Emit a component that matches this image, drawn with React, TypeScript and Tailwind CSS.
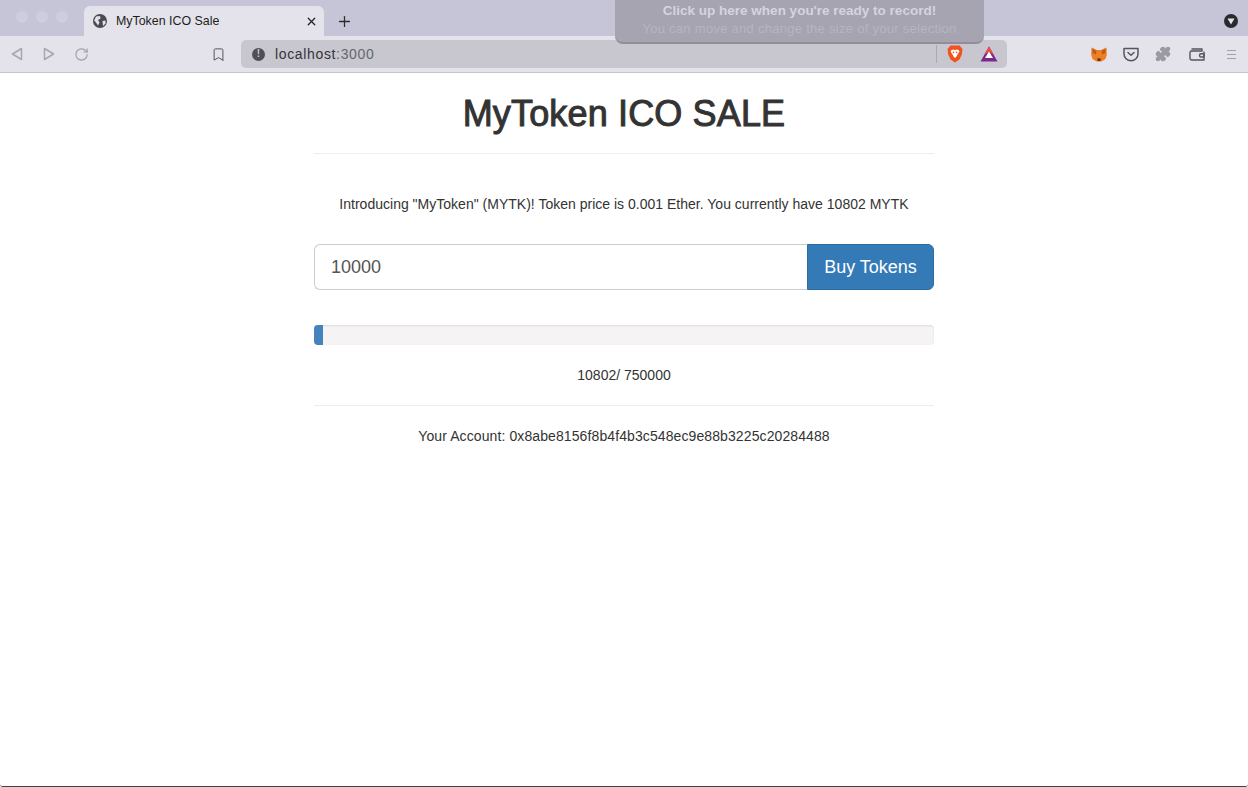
import { Plus, X, RotateCw, Bookmark, Puzzle } from 'lucide-react';

function BackIcon({ flip }: { flip?: boolean }) {
  return (
    <svg width="14" height="16" viewBox="0 0 14 16" fill="none" stroke="#a6a6ae" strokeWidth="1.5" strokeLinejoin="round" className={flip ? 'rotate-180' : ''}>
      <path d="M11.5 2.5 L2.5 8 L11.5 13.5 Z" />
    </svg>
  );
}

function Globe() {
  return (
    <svg width="14" height="14" viewBox="0 0 14 14">
      <circle cx="7" cy="7" r="7" fill="#4a4a50" />
      <path d="M3 2.5 L7 2 L7.5 4.5 L5 6 L6.5 8.5 L5 11.5 L3 8.5 L1.2 6.5 Z" fill="#e4e3ec" />
      <path d="M9.5 7 L12.5 6.5 L12.5 9.5 L10 12 Z" fill="#e4e3ec" />
    </svg>
  );
}

function BraveLogo() {
  return (
    <svg width="16" height="18" viewBox="0 0 16 18">
      <path d="M3.5 0.5 H12.5 L15.5 4 L14.8 9.5 L12.5 14.5 L8 17.5 L3.5 14.5 L1.2 9.5 L0.5 4 Z" fill="#f1521f" />
      <path d="M4.5 5 L6.8 4.5 L8 5.3 L9.2 4.5 L11.5 5 L12.5 6.5 L10.5 9.5 L9.5 11.5 L8 13 L6.5 11.5 L5.5 9.5 L3.5 6.5 Z" fill="#ffffff" />
      <circle cx="6.4" cy="7.4" r="0.8" fill="#f1521f" />
      <circle cx="9.6" cy="7.4" r="0.8" fill="#f1521f" />
    </svg>
  );
}

function BatLogo() {
  return (
    <svg width="18" height="16" viewBox="0 0 18 16">
      <path d="M9 0.5 L17.5 15.5 H0.5 Z" fill="#7a2a8c" />
      <path d="M9 0.5 L13.6 8.6 L9 6 L4.4 8.6 Z" fill="#ee4a3f" />
      <path d="M9 5.5 L13 12 H5 Z" fill="#ffffff" />
    </svg>
  );
}

function FoxLogo() {
  return (
    <svg width="16" height="15" viewBox="0 0 16 15">
      <path d="M0.5 0.5 L6 3 H10 L15.5 0.5 L15.8 8 L14.5 12 L10.5 14.5 H5.5 L1.5 12 L0.2 8 Z" fill="#ee7f22" />
      <path d="M1.5 1.5 L5.5 4 L5 7.5 L1.5 6 Z" fill="#b85c1c" />
      <path d="M14.5 1.5 L10.5 4 L11 7.5 L14.5 6 Z" fill="#b85c1c" />
      <path d="M6 11.5 H10 L9.2 14 H6.8 Z" fill="#4a3325" />
    </svg>
  );
}

function PocketIcon() {
  return (
    <svg width="16" height="15" viewBox="0 0 16 15" fill="none" stroke="#55555c" strokeWidth="1.5" strokeLinecap="round" strokeLinejoin="round">
      <path d="M1 1.5 H15 V7 A7 6.8 0 0 1 1 7 Z" />
      <path d="M5 5.5 L8 8.2 L11 5.5" />
    </svg>
  );
}

function WalletIcon() {
  return (
    <svg width="16" height="13" viewBox="0 0 16 13" fill="none" stroke="#55555c" strokeWidth="1.4" strokeLinejoin="round">
      <path d="M2.5 1 H13 V3 H2.5 A1.6 1.6 0 0 0 1 4.5 V10.5 A1.6 1.6 0 0 0 2.5 12 H15 V3.5" />
      <rect x="10.5" y="5.8" width="4.8" height="3.2" rx="1.6" />
    </svg>
  );
}

function BrowserChrome() {
  return (
    <div className="relative shrink-0">
      {/* tab strip */}
      <div className="flex h-9 items-end bg-[#c5c5d7]">
        <div className="flex h-9 w-[84px] items-center gap-2 pb-[2px] pl-[16px] opacity-25">
          <span className="h-3 w-3 rounded-full bg-[#e8e8f0]" />
          <span className="h-3 w-3 rounded-full bg-[#e8e8f0]" />
          <span className="h-3 w-3 rounded-full bg-[#e8e8f0]" />
        </div>
        <div className="flex h-[30px] w-[240px] items-center rounded-t-[6px] bg-[#e4e3ec] pl-[9px] pr-[6px]">
          <Globe />
          <span className="ml-[9px] flex-1 text-[12.4px] text-[#1d1d20]">MyToken ICO Sale</span>
          <X size={13} strokeWidth={2.4} color="#222" />
        </div>
        <div className="flex h-[30px] w-[40px] items-center justify-center">
          <Plus size={17} strokeWidth={1.8} color="#2d2d30" />
        </div>
        <div className="mr-[10px] ml-auto flex h-[30px] items-center">
          <span className="flex h-[14px] w-[14px] items-center justify-center rounded-full bg-[#2a2a2e]">
            <svg width="8" height="7" viewBox="0 0 8 7">
              <path d="M0.5 0.5 H7.5 L4 6.5 Z" fill="#e4e3ec" />
            </svg>
          </span>
        </div>
      </div>
      {/* toolbar */}
      <div className="flex h-[37px] items-center border-b border-[#c4c4cf] bg-[#e4e3ec]">
        <div className="flex w-[241px] items-center pl-[10px]">
          <BackIcon />
          <span className="ml-[18px]"><BackIcon flip /></span>
          <RotateCw size={15} strokeWidth={1.8} color="#a0a0a8" className="ml-[18px]" />
          <Bookmark size={15} strokeWidth={1.6} color="#55555c" className="ml-[122px]" />
        </div>
        <div className="flex h-[28px] w-[766px] items-center rounded-[5px] bg-[#c8c7d0] pl-[11px] pr-[9px]">
          <span className="flex h-[13px] w-[13px] items-center justify-center rounded-full bg-[#4e4e54] text-[10px] leading-none font-bold text-[#c8c7d0]">!</span>
          <span className="ml-[10px] flex-1 text-[14px] tracking-[0.65px] text-[#333338]">
            localhost<span className="text-[#66666c]">:3000</span>
          </span>
          <span className="h-[18px] w-px bg-[#aaaab2]" />
          <span className="ml-[10px]"><BraveLogo /></span>
          <span className="ml-[17px]"><BatLogo /></span>
        </div>
        <div className="flex flex-1 items-center pl-[84px]">
          <FoxLogo />
          <span className="ml-[16px]"><PocketIcon /></span>
          <Puzzle size={16} fill="#9a9aa2" color="#9a9aa2" className="ml-[16px]" />
          <span className="ml-[18px]"><WalletIcon /></span>
          <div className="ml-[22px] flex w-[9px] flex-col gap-[3px]">
            <span className="h-px bg-[#a0a0a8]" />
            <span className="h-px bg-[#a0a0a8]" />
            <span className="h-px bg-[#a0a0a8]" />
          </div>
        </div>
      </div>
      {/* screen recorder hint */}
      <div className="absolute top-0 left-[615px] flex h-[44px] w-[369px] flex-col items-center rounded-b-[8px] border-b-2 border-[#8f8e99] bg-[#a5a4b0] pt-[3px]">
        <p className="text-[13.5px] leading-[16px] font-bold text-[#d5d4de]">Click up here when you're ready to record!</p>
        <p className="mt-[2px] text-[13px] leading-[16px] tracking-[0.28px] text-[#b6b5c1]">You can move and change the size of your selection</p>
      </div>
    </div>
  );
}

export default function App() {
  return (
    <div className="flex h-[787px] flex-col overflow-hidden bg-white font-['Liberation_Sans',sans-serif] text-[14px] text-[#333]">
      <BrowserChrome />
      <main className="flex flex-1 flex-col rounded-b-[3px] border-b border-[#444]">
        <div className="mx-auto w-[620px]">
          <h1 className="border-b border-[#eee] pt-[21px] pb-[19px] text-center text-[36px] leading-[40px] font-normal tracking-[0.15px] [-webkit-text-stroke:1px_#333]">
            MyToken ICO SALE
          </h1>
          <p className="mt-[40px] text-center leading-[20px] tracking-[0.01px]">
            Introducing "MyToken" (MYTK)! Token price is 0.001 Ether. You currently have 10802 MYTK
          </p>
          <div className="mt-[30px] flex h-[46px]">
            <input
              readOnly
              value="10000"
              className="min-w-0 flex-1 rounded-l-[6px] border border-r-0 border-[#ccc] px-4 text-[18px] text-[#555] outline-none"
            />
            <button className="w-[127px] rounded-r-[6px] border border-[#2e6da4] bg-[#337ab7] text-[18px] text-white">
              Buy Tokens
            </button>
          </div>
          <div className="mt-[35px] h-5 overflow-hidden rounded-[4px] bg-[#f5f3f3] shadow-[inset_0_1px_2px_rgba(0,0,0,0.1)]">
            <div className="h-full bg-[#4484bc]" style={{ width: `${(10802 / 750000) * 100}%` }} />
          </div>
          <p className="mt-[20px] text-center leading-[20px]">10802/ 750000</p>
          <hr className="mt-[20px] border-[#eee]" />
          <p className="mt-[20px] text-center leading-[20px] tracking-[0.1px]">Your Account: 0x8abe8156f8b4f4b3c548ec9e88b3225c20284488</p>
        </div>
      </main>
    </div>
  );
}
